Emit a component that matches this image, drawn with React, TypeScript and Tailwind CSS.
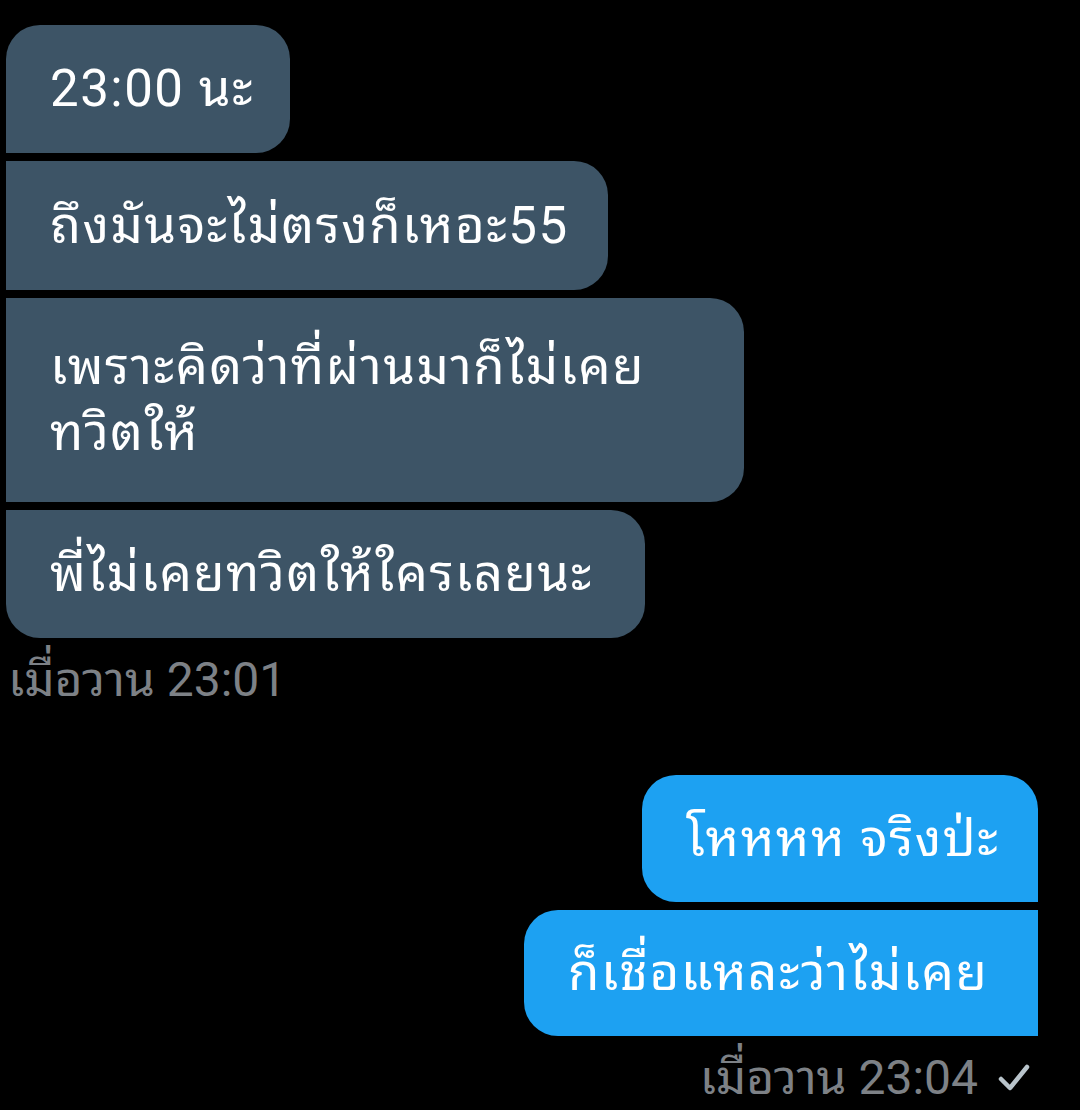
import React from 'react';

const font = "font-['Roboto','Noto_Sans_Thai_Looped','Loma','Garuda','Noto_Sans_Thai','Noto_Sans',sans-serif]";
const msg = 'text-[51px] leading-[66px] tracking-[1.5px]';

const App = () => {
  return (
    <div className={`w-[1080px] h-[1110px] bg-black overflow-hidden ${font} text-white`}>
      <div className="flex flex-col items-start pt-[25px] pl-[6px] gap-[8px]">
        <div className={`w-[284px] h-[128px] bg-[#3d5466] rounded-tl-[34px] rounded-r-[34px] pl-[44px] flex items-center ${msg}`}>
          23:00 นะ
        </div>
        <div className={`w-[602px] h-[129px] bg-[#3d5466] rounded-r-[34px] pl-[44px] flex items-center ${msg}`}>
          ถึงมันจะไม่ตรงก็เหอะ55
        </div>
        <div className={`w-[738px] h-[204px] bg-[#3d5466] rounded-r-[34px] pl-[44px] pt-[36px] ${msg}`}>
          <div className="whitespace-nowrap">เพราะคิดว่าที่ผ่านมาก็ไม่เคย</div>
          <div>ทวิตให้</div>
        </div>
        <div className={`w-[639px] h-[128px] bg-[#3d5466] rounded-r-[34px] rounded-bl-[34px] pl-[44px] flex items-center ${msg}`}>
          พี่ไม่เคยทวิตให้ใครเลยนะ
        </div>
      </div>
      <div className="pl-[8px] mt-[12px] text-[48px] leading-[60px] text-[#7d8186]">
        เมื่อวาน 23:01
      </div>

      <div className="flex flex-col items-end pr-[42px] mt-[65px] gap-[8px]">
        <div className={`w-[396px] h-[127px] bg-[#1da1f2] rounded-l-[34px] rounded-tr-[34px] pl-[44px] flex items-center ${msg}`}>
          โหหหห จริงป่ะ
        </div>
        <div className={`w-[514px] h-[126px] bg-[#1da1f2] rounded-l-[34px] pl-[44px] flex items-center ${msg}`}>
          ก็เชื่อแหละว่าไม่เคย
        </div>
      </div>
      <div className="flex justify-end items-center pr-[50px] mt-[12px] gap-[20px] text-[48px] leading-[60px] text-[#7d8186]">
        <span>เมื่อวาน 23:04</span>
        <svg width="32" height="30" viewBox="0 0 32 30" fill="none">
          <path d="M3 16 L12 25 L29 4" stroke="#b9c4cb" strokeWidth="4.5" strokeLinecap="round" strokeLinejoin="round" />
        </svg>
      </div>
    </div>
  );
};

export default App;
